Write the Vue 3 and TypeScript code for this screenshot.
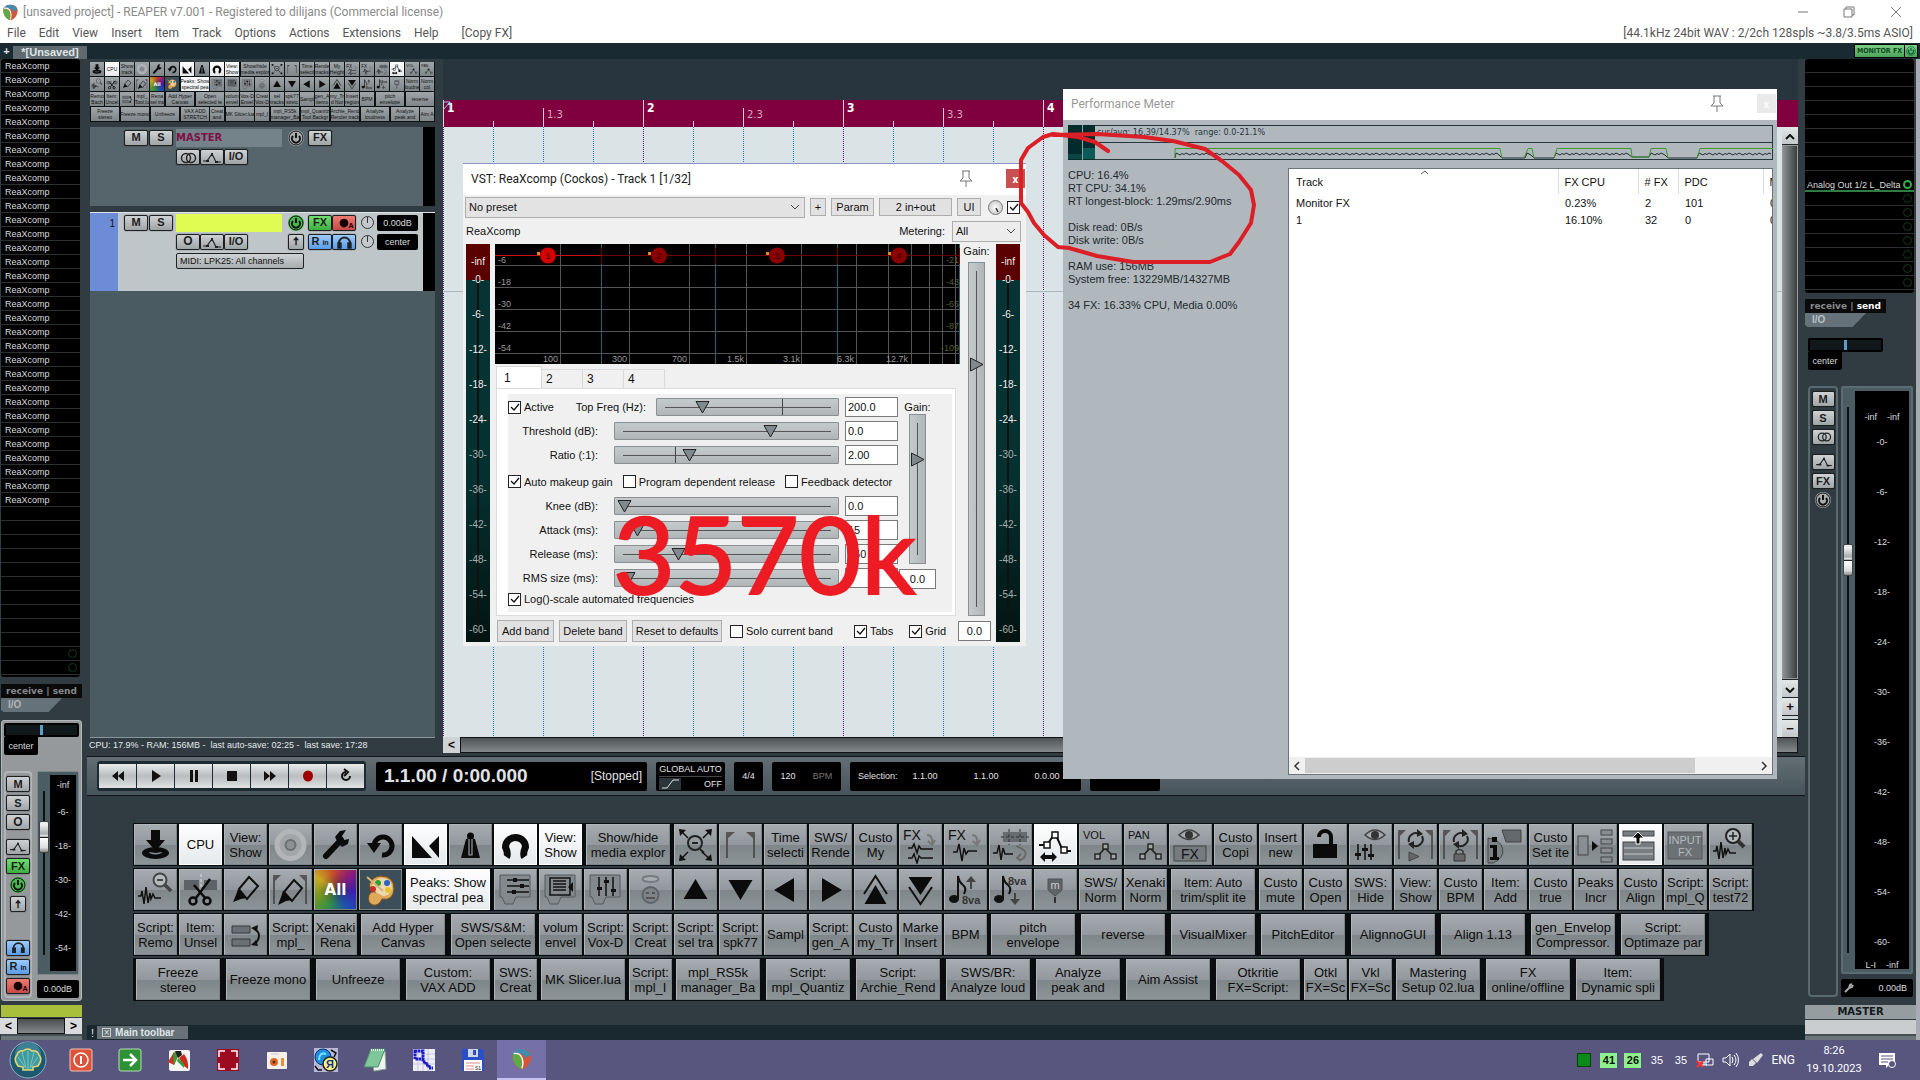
<script setup lang="ts">
interface Cell { t?: string[]; i?: string; s?: number; on?: boolean; bg?: string }

const wave = '<path d="M4 27h3l1-5 2 13 2-17 2 16 2-10 1 6 2-5 2 4h6" fill="none" stroke="#111" stroke-width="1.5"/>'
const sliders3 = '<path d="M6 6h30v22H22l-3 7h-8l-3-7H6z" fill="#83898d" stroke="#555b5f"/>'
const note = '<ellipse cx="10" cy="30" rx="5" ry="4" fill="#111"/><path d="M14 30V7q1 6 5 9t1 9" fill="none" stroke="#111" stroke-width="2"/>'
const envPts = '<path d="M18 33l8-9 9 9" fill="none" stroke="#222" stroke-width="1.6"/><g fill="#a0a6aa" stroke="#222" stroke-width="1.4"><rect x="16" y="30" width="5" height="5"/><rect x="24" y="20" width="5" height="5"/><rect x="32" y="30" width="5" height="5"/></g>'
const eye = (x: number, y: number) => `<path d="M${x - 10} ${y}q10-10 20 0q-10 9-20 0z" fill="#a4aaae" stroke="#444" stroke-width="1.6"/><circle cx="${x}" cy="${y}" r="4" fill="#333"/>`
const loop = '<path d="M5 35V8M38 35V8" stroke="#444" stroke-width="1.6"/><path d="M4 6h8l-7 7zM39 6h-8l7 7z" fill="#555"/><path d="M15 18a7 7 0 0 1 10-8M28 12a7 7 0 0 1-10 9" fill="none" stroke="#222" stroke-width="2"/><path d="M23 5l6 5-6 3zM20 25l-6-5 6-3z" fill="#222"/>'

const icons: Record<string, string> = {
  insert: '<path d="M17 6h9v10h5L21.500 27 12 16h5z" fill="#0b0b0b"/><path fill-rule="evenodd" d="M8 29a13.500 6 0 1 0 27 0a13.500 6 0 1 0-27 0zM15 28a6.500 2.500 0 1 0 13 0l-6 1z" fill="#0b0b0b"/>',
  rec: '<circle cx="21.500" cy="21" r="16" fill="#b2b6b9"/><circle cx="21.500" cy="21" r="11" fill="#a2a6a9"/><circle cx="21.500" cy="21" r="5" fill="#8c9194" stroke="#6a6f72" stroke-width="2"/>',
  wrench: '<path d="M12 32L27 16" stroke="#0b0b0b" stroke-width="6" stroke-linecap="round"/><path d="M24 19l-3-6 5-6 6-1-4 6 2 4 5-1 0 0-1 5-6 3z" fill="#0b0b0b"/>',
  undo: '<path d="M15 22A9 9 0 1 1 23 31" fill="none" stroke="#0b0b0b" stroke-width="5"/><path d="M8 19h14l-7 10z" fill="#0b0b0b"/>',
  ramp: '<path d="M8 12v22h20zM35 12v22L25 22z" fill="#0b0b0b"/>',
  metro: '<path d="M12 34l5-19h9l5 19zM18 12a3.500 3.500 0 1 1 7 0l-1 6h-5z" fill="#0b0b0b"/><path d="M20 15v16h3V15" fill="none" stroke="#9aa0a4" stroke-width="1.200"/>',
  magnet: '<path d="M12.500 33q2-3-1-10A10 9.500 0 1 1 31.500 23q-3 7-1 10" fill="none" stroke="#0b0b0b" stroke-width="7"/>',
  zoomall: '<g fill="none" stroke="#222" stroke-width="2"><circle cx="21" cy="19" r="7"/><path d="M18 19h6M26 25l4 4"/></g><path d="M5 5l7 1-6 6zM38 5l-7 1 6 6zM5 37l7-1-6-6zM38 37l-7-1 6-6z" fill="#111"/><path d="M6 6l8 8M37 6l-8 8M6 36l8-8M37 36l-9-8" stroke="#111" stroke-width="1.500"/>',
  bracket: '<path d="M8 34V10M35 34V10" stroke="#444" stroke-width="1.600"/><path d="M7 8h9l-8 7zM36 8h-9l8 7z" fill="#555"/>',
  fx2: '<text x="4" y="16" font-size="14" font-family="Liberation Sans" fill="#111">FX</text><path d="M28 11q6 0 5 8M29 17l4 4 3-5" fill="none" stroke="#777" stroke-width="2"/><path d="M9 24h4l2-4 3 9 2-7 2 3h12M9 34h4l2-4 3 9 2-7 2 2h12" fill="none" stroke="#111" stroke-width="1.500"/>',
  fx1: '<text x="4" y="16" font-size="14" font-family="Liberation Sans" fill="#111">FX</text><path d="M28 11q6 0 5 8M29 17l4 4 3-5" fill="none" stroke="#777" stroke-width="2"/><path d="M9 28h4l2-8 3 17 2-13 2 6 2-3h9" fill="none" stroke="#111" stroke-width="1.500"/>',
  itemw: '<path d="M14 8h24v10H14z" fill="#666c70"/><path d="M12 13h28M20 5v16M31 5v16" stroke="#333" stroke-dasharray="3 2"/><path d="M4 29h4l2-8 2 15 2-12 2 6h8" fill="none" stroke="#111" stroke-width="1.500"/><path d="M27 22q12 4 9 10t-8 2l4-4m-4 4l4 3" fill="none" stroke="#666" stroke-width="1.800"/>',
  env: '<path d="M5 21h8L21 9l8 18h8" fill="none" stroke="#111" stroke-width="2"/><g fill="#fff" stroke="#111" stroke-width="1.500"><rect x="10" y="18" width="6" height="6"/><rect x="18" y="8" width="6" height="6"/><rect x="27" y="23" width="6" height="6"/></g><path d="M6 33l5-5v3h7v-3l5 5-5 5v-3h-7v3z" fill="#111"/>',
  vol: '<text x="4" y="15" font-size="11" font-family="Liberation Sans" fill="#111">VOL</text>' + envPts,
  pan: '<text x="4" y="15" font-size="11" font-family="Liberation Sans" fill="#111">PAN</text>' + envPts,
  eyefx: eye(20, 11) + '<rect x="5" y="22" width="32" height="15" fill="#757b7f" stroke="#444"/><text x="12" y="35" font-size="14" font-family="Liberation Sans" fill="#111">FX</text>',
  lock: '<rect x="9" y="20" width="24" height="14" fill="#0b0b0b"/><path d="M15 13a6 6 0 0 1 12 0v8" fill="none" stroke="#0b0b0b" stroke-width="4"/>',
  eyemix: eye(26, 11) + '<path d="M9 20v16M16 20v16M22 20v16" stroke="#111" stroke-width="1.500"/><path d="M6 29h6v3H6zM13 24h6v3h-6zM19 30h6v3h-6z" fill="#111"/>',
  looplay: loop + '<path d="M15 28l10 4.500-10 4.500z" fill="#666" stroke="#444"/>',
  looplock: loop + '<path d="M15 30h11v7H15z" fill="#666" stroke="#333"/><path d="M17 30v-3q3-3 7 0v3" fill="none" stroke="#333" stroke-width="1.500"/>',
  info: '<path d="M18 6h19v12H22z" fill="#63696d" stroke="#444"/><path d="M4 14a16 13 0 0 1 5 25h-5z" fill="#7a8084" stroke="#444"/><path d="M8 13h5v5H8zM6 21h7v12h2v3H6v-3h3v-9H6z" fill="#0b0b0b"/>',
  list: '<g fill="#888e92" stroke="#444"><rect x="4" y="12" width="10" height="19"/><rect x="27" y="6" width="11" height="5"/><rect x="27" y="15" width="11" height="5"/><rect x="27" y="24" width="11" height="5"/><rect x="27" y="33" width="11" height="5"/></g><path d="M18 17l6 5-6 5z" fill="#0b0b0b"/>',
  alignt: '<g fill="#777d81" stroke="#444"><rect x="4" y="7" width="31" height="5"/><rect x="4" y="18" width="31" height="18"/></g><path d="M5 24h29M5 30h29" stroke="#ccc"/><path d="M17 20v-6h-4l6-6 6 6h-4v6z" fill="#0b0b0b" stroke="#fff"/>',
  inputfx: '<rect x="4" y="8" width="34" height="27" fill="#6c7175" stroke="#565b5e"/><g font-size="11" font-family="Liberation Sans" fill="#b5babd" text-anchor="middle"><text x="21" y="20">INPUT</text><text x="21" y="32">FX</text></g>',
  zoomin: '<circle cx="24" cy="12" r="7" fill="#b5babd" stroke="#222" stroke-width="2"/><path d="M20 12h8M24 8v8" stroke="#222" stroke-width="1.500"/><path d="M29 17l6 6" stroke="#333" stroke-width="4"/>' + wave,
  zoomout: '<circle cx="26" cy="11" r="6.500" fill="#b5babd" stroke="#444" stroke-width="2"/><path d="M23 11h6" stroke="#222" stroke-width="1.500"/><path d="M31 16l6 6" stroke="#444" stroke-width="3.500"/>' + wave,
  cut: '<path d="M5 11h15v10H5zM25 11h13v10H25z" fill="#5c6266"/><path d="M22 5v18" stroke="#ddd" stroke-dasharray="3 2"/><path d="M31 10L17 29M15 16l12 14" stroke="#0b0b0b" stroke-width="2.500"/><circle cx="14" cy="32" r="3.500" fill="none" stroke="#0b0b0b" stroke-width="2.500"/><circle cx="28" cy="32" r="3.500" fill="none" stroke="#0b0b0b" stroke-width="2.500"/>',
  marker: '<path d="M15 20L25 8l9 9-11 13z" fill="none" stroke="#111" stroke-width="2"/><path d="M14 20l9 9-6 1-8 3 3-7z" fill="#0b0b0b"/>',
  markerb: '<path d="M5 35V8M37 35V8" stroke="#444" stroke-width="1.600"/><path d="M4 6h8l-7 7zM38 6h-8l7 7z" fill="#555"/><path d="M15 23L25 11l8 8-10 13z" fill="none" stroke="#111" stroke-width="2"/><path d="M14 22l9 9-6 1-8 4 3-8z" fill="#0b0b0b"/>',
  all: '<text x="21.500" y="26" font-size="15" font-weight="bold" font-family="DejaVu Sans" fill="#fff" text-anchor="middle">All</text>',
  palette: '<path d="M21 7q14 0 14 13-1 12-12 10-3 7-9 6-6-2-4-10 2-4 7-3-9-5-6-9 3-6 10-7z" fill="#e0a85a" stroke="#7d5320"/><path d="M22 9q11 0 11 11-2 7-9 7-12-5-11-11 3-6 9-7z" fill="#ead9b0"/><circle cx="19" cy="14" r="3" fill="#2e9e30"/><circle cx="28" cy="14" r="3" fill="#2a62c8"/><circle cx="14" cy="20" r="3" fill="#c43424"/><circle cx="29" cy="21" r="3" fill="#e6c32c"/><path d="M8 8l16 14" stroke="#d9b080" stroke-width="2"/>',
  tcp1: sliders3 + '<path d="M13 11h22M13 17h22M13 23h22" stroke="#111" stroke-width="1.500"/><path d="M19 9h4v4h-4zM26 15h4v4h-4zM18 21h4v4h-4z" fill="#111"/>',
  tcp2: sliders3 + '<path d="M11 9h20v17H11z" fill="none" stroke="#111" stroke-width="1.500"/><path d="M14 12h13M14 15h13M14 18h13M14 21h13" stroke="#111" stroke-width="1.500"/><path d="M34 13v10l-5-5z" fill="#111"/>',
  tcp3: sliders3 + '<path d="M15 8v19M22 8v19M29 8v19" stroke="#111" stroke-width="1.500"/><path d="M13 18h5v3h-5zM20 11h5v3h-5zM27 20h5v3h-5z" fill="#111"/>',
  face: '<ellipse cx="21.500" cy="10" rx="8" ry="3" fill="#a7acaf" stroke="#777c80" stroke-width="2"/><circle cx="21.500" cy="26" r="8" fill="#7d8387" stroke="#5d6367" stroke-width="2"/><path d="M17 24h3M23 24h3M17 29h9" stroke="#444" stroke-width="1.500" fill="none"/>',
  up: '<path d="M21.500 10l12 20h-24z" fill="#0b0b0b"/>',
  down: '<path d="M21.500 31l12-20h-24z" fill="#0b0b0b"/>',
  left: '<path d="M10 21l20-12v24z" fill="#0b0b0b"/>',
  right: '<path d="M33 21L13 9v24z" fill="#0b0b0b"/>',
  dup: '<path d="M21.500 16l11 19h-22z" fill="#0b0b0b"/><path d="M10 25L21.500 7 33 25" fill="none" stroke="#111" stroke-width="2"/>',
  ddown: '<path d="M21.500 26l12-18h-24z" fill="#0b0b0b"/><path d="M10 18l11.500 17L33 18" fill="none" stroke="#111" stroke-width="2"/>',
  noteup: note + '<path d="M26 20v-7h-4l5-6 5 6h-4v7z" fill="#444"/><text x="18" y="35" font-size="11" font-weight="bold" font-family="Liberation Sans" fill="#333">8va</text>',
  notedn: note + '<path d="M25 24v6h-4l5 6 5-6h-4v-6z" fill="#444"/><text x="19" y="16" font-size="11" font-weight="bold" font-family="Liberation Sans" fill="#333">8va</text>',
  mmark: '<path d="M14 10h14v11l-7 6-7-6z" fill="#5e6468" stroke="#4c5256"/><text x="21" y="20" font-size="11" font-family="Liberation Sans" fill="#ccc" text-anchor="middle">m</text><path d="M21 28v6" stroke="#111" stroke-width="1.500"/>',
  swap: '<path d="M8 12h18v7H8zM8 25h18v7H8z" fill="#6a7074" stroke="#33383b"/><path d="M31 15q8 6 0 15" fill="none" stroke="#111" stroke-width="2"/><path d="M27 14l7-3-1 7zM27 31l7 1-2-6z" fill="#111"/>',
}

const i = (n: string, on = false, bg = ''): Cell => ({ i: n, on, bg })
const t = (...l: string[]): Cell => ({ t: l })
const w = (...l: string[]): Cell => ({ t: l, s: 2 })
const onT = (s: number, ...l: string[]): Cell => ({ t: l, s, on: true })

const head1 = (view: Cell): Cell[] => [i('insert'), onT(1, 'CPU'), view, i('rec'), i('wrench'), i('undo'), i('ramp', true), i('metro'), i('magnet', true), onT(1, 'View:', 'Show'), w('Show/hide', 'media explor'), i('zoomall'), i('bracket')]
const mid1: Cell[] = [i('fx2'), i('fx1'), i('itemw'), i('env', true), i('vol'), i('pan')]
const head2: Cell[] = [i('zoomout'), i('cut'), i('marker'), i('markerb'), i('all', false, 'rainbow'), i('palette', false, 'slate'), onT(2, 'Peaks: Show', 'spectral pea'), i('tcp1'), i('tcp2'), i('tcp3'), i('face'), i('up'), i('down'), i('left'), i('right'), i('dup'), i('ddown'), i('noteup'), i('notedn'), i('mmark')]

const toolbar: Cell[][] = [
  [...head1(t('View:', 'Show')), t('Time', 'selecti'), t('SWS/', 'Rende'), t('Custo', 'My'), ...mid1, i('eyefx'), t('Custo', 'Copi'), t('Insert', 'new'), i('lock'), i('eyemix'), i('looplay'), i('looplock'), i('info'), t('Custo', 'Set ite'), i('list'), i('alignt', true), i('inputfx'), i('zoomin')],
  [...head2, t('SWS/', 'Norm'), t('Xenaki', 'Norm'), w('Item: Auto', 'trim/split ite'), t('Custo', 'mute'), t('Custo', 'Open'), t('SWS:', 'Hide'), t('View:', 'Show'), t('Custo', 'BPM'), t('Item:', 'Add'), t('Custo', 'true'), t('Peaks', 'Incr'), t('Custo', 'Align'), t('Script:', 'mpl_Q'), t('Script:', 'test72')],
  [t('Script:', 'Remo'), t('Item:', 'Unsel'), i('swap'), t('Script:', 'mpl_'), t('Xenaki', 'Rena'), w('Add Hyper', 'Canvas'), w('SWS/S&M:', 'Open selecte'), t('volum', 'envel'), t('Script:', 'Vox-D'), t('Script:', 'Creat'), t('Script:', 'sel tra'), t('Script:', 'spk77'), t('Sampl'), t('Script:', 'gen_A'), t('Custo', 'my_Tr'), t('Marke', 'Insert'), t('BPM'), w('pitch', 'envelope'), w('reverse'), w('VisualMixer'), w('PitchEditor'), w('AlignnoGUI'), w('Align 1.13'), w('gen_Envelop', 'Compressor.'), w('Script:', 'Optimaze par')],
  [w('Freeze', 'stereo'), w('Freeze mono'), w('Unfreeze'), w('Custom:', 'VAX ADD'), t('SWS:', 'Creat'), w('MK Slicer.lua'), t('Script:', 'mpl_I'), w('mpl_RS5k', 'manager_Ba'), w('Script:', 'mpl_Quantiz'), w('Script:', 'Archie_Rend'), w('SWS/BR:', 'Analyze loud'), w('Analyze', 'peak and'), w('Aim Assist'), w('Otkritie', 'FX=Script:'), t('Otkl', 'FX=Sc'), t('Vkl', 'FX=Sc'), w('Mastering', 'Setup 02.lua'), w('FX', 'online/offline'), w('Item:', 'Dynamic spli')],
]
const mini: Cell[][] = [
  [...head1(t('Show', 'track')), t('Time', 'selecti'), t('Rende', 'tracks'), t('My', 'Height'), ...mid1],
  [...head2, t('Norm', 'loudne'), t('Norm', 'col')],
  [t('Remo', 'Bach'), t('Item:', 'Uncel'), i('swap'), t('mpl_', 'Tool.lu'), t('Rena', 'sel tra'), w('Add Hyper', 'Canvas'), w('Open', 'selected te'), t('volum', 'envel'), t('Vox-D', 'Envel'), t('Creat', 'Vox-D'), t('sel', 'tracks'), t('spk77', 'stretc'), t('Sampl'), t('gen_A', 'items'), t('my_Tr', 'd Nor'), t('Insert', 'region'), t('BPM'), w('pitch', 'envelope'), w('reverse')],
  [w('Freeze', 'stereo'), w('Freeze mono'), w('Unfreeze'), w('VAX ADD', 'STRETCH'), t('Creat', 'and'), w('MK Slicer.lua'), t('mpl_I'), w('mpl_RS5k', 'manager_Ba'), w('mpl_Quantiz', 'Tool Backgr'), w('Archie_Rend', 'Render track'), w('Analyze', 'loudness'), w('Analyze', 'peak and'), t('Aim A')],
]

const ringI = '<circle cx="9" cy="8" r="4.500"/><circle cx="14" cy="8" r="4.500"/>'
const envI = '<path d="M2 11h4l5-7 4 8h5" stroke-width="1.200"/><path d="M5 10h3v2H5zM10 3h2v3h-2zM14 11h3v2h-3z" fill="#222" stroke="none"/>'
const phones = '<path d="M6 10V8a5.500 5.500 0 0 1 11 0v2" stroke-width="2"/><path d="M5 8h3v5H5zM15 8h3v5h-3z" fill="#123"/>'
const armI = '<circle cx="11" cy="8" r="5" fill="#140000" stroke="none"/><text x="16" y="14" font-size="8" font-weight="bold" fill="#140000" stroke="none">A</text>'
const powerI = '<circle cx="8" cy="8" r="7" class="pd"/><path d="M5 6a4 4 0 1 0 6 0M8 3v5" stroke-width="2"/>'
const logo = '<path d="M12 1c7 0 11 4 10 10-1 7-6 12-10 12S3 18 2 11C1 5 5 1 12 1z" fill="#d4543c"/><path d="M2 6q6-1 9 4 3 6 1 13C7 22 2 16 2 11z" fill="#62a845"/><path d="M2 7C5-1 18-1 22 8q-3 0-6 3Q12 3 2 7z" fill="#3f8db0"/><path d="M3 6q7-1 9 5 2 5 0 11" fill="none" stroke="#fff" stroke-width="1.500"/>'

const menus = ['File', 'Edit', 'View', 'Insert', 'Item', 'Track', 'Options', 'Actions', 'Extensions', 'Help']
const bars = Array.from({ length: 27 }, (_, n) => n)
const meterDb = ['-0-', '-6-', '-12-', '-18-', '-24-', '-30-', '-36-', '-42-', '-48-', '-54-', '-60-']
const graphV = [65, 134, 194, 251, 306, 361, 393, 416, 434, 447, 460]
const freqs: [number, string][] = [[63, '100'], [132, '300'], [192, '700'], [249, '1.5k'], [305, '3.1k'], [359, '6.3k'], [413, '12.7k']]
const dbL = ['-6', '-18', '-30', '-42', '-54']
const dbR = ['-21', '-43', '-65', '-87', '-109']
const nodes = [53, 164, 282, 404]
const params1: [string, number, string, string][] = [['Threshold (dB):', 71, '0.0', ''], ['Ratio (:1):', 32, '2.00', 'n1']]
const params2: [string, number, string][] = [['Knee (dB):', 1, '0.0'], ['Attack (ms):', 7, '15'], ['Release (ms):', 27, '150'], ['RMS size (ms):', 3, '5']]
const perf = ['CPU: 16.4%', 'RT CPU: 34.1%', 'RT longest-block: 1.29ms/2.90ms', '', 'Disk read: 0B/s', 'Disk write: 0B/s', '', 'RAM use: 156MB', 'System free: 13229MB/14327MB', '', '34 FX: 16.33% CPU, Media 0.00%']
const noisy = (a: number, b: number) => Array.from({ length: Math.floor((b - a) / 2) }, (_, n) => `L${a + n * 2} ${28 + ((n * 7) % 5) * 0.5}`).join('')
const cpuLine = `M107 33${noisy(108, 432)}L434 33H457${noisy(459, 465)}L466 33H486${noisy(488, 563)}L564 32H581${noisy(583, 599)}L600 33H629${noisy(631, 705)}`
const transport = [
  'M12 4v10L6 9zM18 4v10l-6-5z', 'M8 3l9 6-9 6z', 'M8 3h3v12H8zM13 3h3v12h-3z', 'M7 4h10v10H7z', 'M6 4v10l6-5zM12 4v10l6-5z', 'M17 9a5 5.500 0 1 1-10 0a5 5.500 0 1 1 10 0', '',
]
const stripDb = ['-6-', '-18-', '-30-', '-42-', '-54-']
const tasks = [
  '<rect x="1" y="1" width="22" height="22" rx="2" fill="#dd5238" stroke="#f5c0b0"/><circle cx="12" cy="12" r="7" fill="none" stroke="#fff" stroke-width="1.500"/><path d="M12 8v8" stroke="#fff" stroke-width="2"/>',
  '<rect x="1" y="1" width="22" height="22" rx="2" fill="#2c9234" stroke="#b5dfb5"/><path d="M5 12h13M12 6l6 6-6 6" fill="none" stroke="#fff" stroke-width="2.500"/>',
  '<rect x="2" y="2" width="21" height="21" rx="2" fill="#f4f4f4"/><path d="M7 4L1 14l6 3 4-9z" fill="#d23020"/><path d="M7 17l4-9 1-3-4-1-2 4z" fill="#31a03a"/><path d="M8 3h6l1 4-4 3z" fill="#222"/><path d="M12 10l5-4q5 7 4 15l-4-3z" fill="#cc2a1c"/><path d="M11 10l-1 3 7 7 0-4z" fill="#31a03a"/>',
  '<rect x="1" y="1" width="22" height="22" fill="#9d0b20"/><path d="M3 9V3h6M15 3h6v6M21 15v6h-6M9 21H3v-6" fill="none" stroke="#fff" stroke-width="1.500"/>',
  '<rect x="2" y="4" width="20" height="17" rx="1" fill="#f5f1ea"/><circle cx="9" cy="14" r="4" fill="#e2682a"/><circle cx="9" cy="14" r="1.500" fill="#5b2a10"/><path d="M16 10h3v8h-3z" fill="#eb8f3a"/><path d="M6 6h8" stroke="#ccc"/>',
  '<rect width="24" height="24" fill="#b9b8d8"/><circle cx="9" cy="9" r="8" fill="#1e90e0" stroke="#003070"/><path d="M5 12q0-8 7-6" stroke="#7fe0ff" stroke-width="2" fill="none"/><circle cx="16" cy="16" r="7" fill="#fff27a" stroke="#222" stroke-width="1.500"/><text x="16" y="20" font-size="11" font-weight="bold" font-family="Liberation Sans" text-anchor="middle" fill="#1030a0">Я</text><path d="M17 2l5 3-2 4M1 18l3 4 4 0" stroke="#111" fill="none" stroke-width="1.500"/>',
  '<path d="M7 3h15l1 18-12 2z" fill="#eef3ee" stroke="#8a9"/><path d="M8 1h14l-7 18H1z" fill="#7fc79a" stroke="#4b8d68"/><path d="M8 2h13" stroke="#e8f6ec" stroke-width="2" stroke-dasharray="1 1"/>',
  '<rect x="1" y="1" width="22" height="22" fill="#eeeef6"/><path d="M1 6h22M1 11h22M1 16h22M6 1v22M11 1v22M16 1v22" stroke="#c4c4dc"/><path d="M3 3h8v8H3zM11 11v3h3v3h3v3h4" fill="none" stroke="#1a1ac8" stroke-width="3" stroke-dasharray="2.500 .5"/>',
  '<path d="M1 1h20l2 2v20H1z" fill="#2a50c8"/><path d="M7 1h10v8H7z" fill="#cfd6e6"/><path d="M12 2h3v5h-3z" fill="#2a50c8"/><path d="M3 12h18v11H3z" fill="#fff"/><path d="M5 15h14M5 18h8M5 21h8" stroke="#d88" /><text x="14" y="22" font-size="5" font-family="Liberation Sans" fill="#111">S1</text>',
]
</script>

<template>
  <div class="app">
    <header class="title">
      <svg width="17" height="17" viewBox="0 0 24 24" v-html="logo" />
      <span class="ttl">[unsaved project] - REAPER v7.001 - Registered to dilijans (Commercial license)</span>
      <div class="winbtns">
        <button aria-label="Minimize"><svg width="12" height="12"><path d="M1 6h10" /></svg></button>
        <button aria-label="Restore"><svg width="12" height="12"><path d="M1 3h8v8H1zM3 3V1h8v8H9" /></svg></button>
        <button aria-label="Close"><svg width="12" height="12"><path d="M1 1l10 10M11 1L1 11" /></svg></button>
      </div>
    </header>
    <nav class="menu">
      <a v-for="m in menus" :key="m" href="#">{{ m }}</a>
      <a href="#" class="copy">[Copy FX]</a>
      <span class="audio">[44.1kHz 24bit WAV : 2/2ch 128spls ~3.8/3.5ms ASIO]</span>
    </nav>
    <div class="tabs">
      <button class="plus">+</button><button class="ptab">*[Unsaved]</button>
      <span class="monfx"><button>MONITOR FX</button><button aria-label="Power"><svg width="10" height="10" viewBox="0 0 16 16" fill="none" stroke="#063" v-html="powerI" /></button></span>
    </div>

    <main class="main">
      <aside class="mix left">
        <div class="fxlist">
          <div v-for="n in 44" :key="n" class="fxrow"><span v-if="n <= 32">ReaXcomp</span><i v-if="n > 42" class="dot" /></div>
        </div>
        <div class="rs">receive | send</div>
        <div class="io">I/O</div>
        <div class="strip">
          <input class="pan" type="range" value="50" aria-label="Pan">
          <div class="panlab">center</div>
          <div class="sbody">
            <div class="bcol">
              <button class="b">M</button><button class="b">S</button><button class="b big-o">O</button>
              <button class="b g6" aria-label="Envelope"><svg width="22" height="14" viewBox="0 0 22 16" v-html="envI" /></button>
              <button class="b green">FX</button>
              <button class="pw on" aria-label="Bypass"><svg width="16" height="16" v-html="powerI" /></button>
              <button class="b sq">🠅</button>
              <button class="b blue push" aria-label="Monitor"><svg width="22" height="14" viewBox="0 0 22 16" v-html="phones" /></button>
              <button class="b blue">R <small>in</small></button>
              <button class="b red" aria-label="Record arm"><svg width="22" height="14" viewBox="0 0 22 16" v-html="armI" /></button>
            </div>
            <div class="fcol">
              <div class="fader"><input class="fd" type="range" value="72" aria-label="Volume"><div class="vu"><span class="vinf">-inf</span><span v-for="d in stripDb" :key="d">{{ d }}</span></div></div>
              <output>0.00dB</output>
            </div>
          </div>
        </div>
        <div class="lime" />
        <div class="sbar"><button>&lt;</button><i /><button>&gt;</button></div>
        <div class="foot" />
      </aside>

      <section class="center">
        <div class="work">
          <div class="tcp">
            <div class="mini">
              <div v-for="(r, a) in mini" :key="a" class="mrow">
                <button v-for="(c, k) in r" :key="k" class="mc" :class="[{ wide: c.s === 2, on: c.on }, c.bg]">
                  <svg v-if="c.i" viewBox="0 0 43 41" v-html="icons[c.i]" /><span v-for="l in c.t" :key="l">{{ l }}</span>
                </button>
              </div>
            </div>
            <div class="track master">
              <div class="tgrid">
                <div class="pair"><button class="b">M</button><button class="b">S</button></div>
                <div class="tname">MASTER</div>
                <button class="pw" aria-label="Bypass"><svg width="16" height="16" v-html="powerI" /></button>
                <div class="trio"><button class="b">FX</button></div>
                <div class="trio r2"><button class="b" aria-label="Mono"><svg width="22" height="16" v-html="ringI" /></button><button class="b" aria-label="Envelope"><svg width="22" height="16" v-html="envI" /></button><button class="b">I/O</button></div>
              </div>
              <i class="tvu" />
            </div>
            <div class="track one">
              <div class="tnum">1</div>
              <div class="tgrid">
                <div class="pair"><button class="b">M</button><button class="b">S</button></div>
                <div class="tname yel" />
                <button class="pw on" aria-label="Bypass"><svg width="16" height="16" v-html="powerI" /></button>
                <div class="trio"><button class="b green">FX</button><button class="b red" aria-label="Record arm"><svg width="22" height="14" viewBox="0 0 22 16" v-html="armI" /></button></div>
                <i class="knob" /><output>0.00dB</output>
                <div class="trio r2"><button class="b big-o">O</button><button class="b" aria-label="Envelope"><svg width="22" height="16" v-html="envI" /></button><button class="b">I/O</button></div>
                <button class="b sq">🠅</button>
                <div class="trio"><button class="b blue">R <small>in</small></button><button class="b blue" aria-label="Monitor"><svg width="22" height="16" v-html="phones" /></button></div>
                <i class="knob" /><output>center</output>
                <button class="midi r2">MIDI: LPK25: All channels</button>
              </div>
              <i class="tvu" />
            </div>
            <div class="tfill" />
            <div class="status">CPU: 17.9% - RAM: 156MB -&nbsp; last auto-save: 02:25 -&nbsp; last save: 17:28</div>
          </div>

          <div class="arr">
            <svg class="ruler" height="27">
              <g v-for="n in bars" :key="n">
                <line :x1="n * 50 + .5" :x2="n * 50 + .5" :y1="n % 4 === 0 ? 0 : n % 2 === 0 ? 8 : 21" y2="27" stroke="#e9c9d8" />
                <text v-if="n % 4 === 0" :x="n * 50 + 4" y="12" class="rb">{{ n / 4 + 1 }}</text>
                <text v-else-if="n % 2 === 0" :x="n * 50 + 4" y="18" class="rs2">{{ Math.floor(n / 4) + 1 }}.3</text>
              </g>
              <path d="M0 2h7v8M7 2L0 10" fill="none" stroke="#7fd8ee" />
            </svg>
            <div class="arow">
              <svg class="grid">
                <line v-for="n in bars" :key="n" :x1="n * 50 + .5" :x2="n * 50 + .5" y1="0" y2="100%" :stroke="n % 4 === 0 ? '#6a1080' : '#1c78d8'" stroke-dasharray="1 1" />
                <line x1="0" x2="100%" y1="164.500" y2="164.500" stroke="#a9b7bb" />
              </svg>
              <div class="vsb">
                <button aria-label="Scroll up"><svg width="10" height="6"><path d="M1 5l4-4 4 4" /></svg></button><i />
                <button aria-label="Scroll down"><svg width="10" height="6"><path d="M1 1l4 4 4-4" /></svg></button><button>+</button><b /><button>−</button>
              </div>
            </div>
            <div class="hsb"><button>&lt;</button><i /></div>
          </div>
        </div>

        <div class="transport">
          <div class="tbtns">
            <button v-for="(p, k) in transport" :key="k" :aria-label="'Transport ' + k">
              <svg width="24" height="18"><path v-if="p" :d="p" :fill="k === 5 ? '#a00000' : '#111'" /><path v-else d="M12 5a4 4 0 1 0 4 4M10 2l4 3-4 4" fill="none" stroke="#111" stroke-width="2" /></svg>
            </button>
          </div>
          <div class="disp"><b>1.1.00 / 0:00.000</b><span>[Stopped]</span></div>
          <div class="ga"><span>GLOBAL AUTO</span><div><svg width="22" height="12"><path d="M3 10h5l6-8h6" fill="none" stroke="#ddd" /></svg><span>OFF</span></div></div>
          <div class="box sm">4/4</div>
          <div class="box bpm"><span>120</span><span class="dim">BPM</span></div>
          <div class="box sel"><span>Selection:</span><span>1.1.00</span><span>1.1.00</span><span>0.0.00</span></div>
          <div class="box last" />
        </div>

        <div class="tools">
          <div class="tset">
            <div v-for="(r, a) in toolbar" :key="a" class="trow">
              <button v-for="(c, k) in r" :key="k" class="tc" :class="[{ wide: c.s === 2, on: c.on }, c.bg]">
                <svg v-if="c.i" viewBox="0 0 43 41" v-html="icons[c.i]" /><span v-for="l in c.t" :key="l">{{ l }}</span>
              </button>
            </div>
          </div>
        </div>
        <div class="dock"><span>!</span><button><i>×</i>Main toolbar</button></div>
      </section>

      <aside class="mix right">
        <div class="fxlist">
          <div v-for="n in 16" :key="n" class="fxrow" :class="{ send: n === 9 }"><span v-if="n === 9">Analog Out 1/2 L_Delta</span><i v-if="n > 8" class="dot" /></div>
        </div>
        <div class="rs">receive | <b>send</b></div>
        <div class="io">I/O</div>
        <div class="rstrip">
          <input class="pan" type="range" value="50" aria-label="Pan">
          <div class="panlab">center</div>
          <div class="sbody">
            <div class="bcol">
              <button class="b">M</button><button class="b">S</button>
              <button class="b" aria-label="Mono"><svg width="22" height="14" viewBox="0 0 22 16" v-html="ringI" /></button>
              <button class="b g6" aria-label="Envelope"><svg width="22" height="14" viewBox="0 0 22 16" v-html="envI" /></button>
              <button class="b">FX</button>
              <button class="pw" aria-label="Bypass"><svg width="16" height="16" v-html="powerI" /></button>
            </div>
            <div class="fcol">
              <div class="fader"><input class="fd" type="range" value="72" aria-label="Volume"><div class="vu"><span class="two"><i>-inf</i><i>-inf</i></span><span v-for="d in meterDb" :key="d">{{ d }}</span><span class="two"><i>L-I</i><i>-inf</i></span></div></div>
              <output><svg width="10" height="10"><path d="M1 9l5-5M5 5l1-3 2-1M5 5l3-1 1-2" stroke="#aaa" stroke-width="2" fill="none" /></svg>0.00dB</output>
            </div>
          </div>
        </div>
        <div class="mname">MASTER</div>
        <div class="mwhite" />
        <div class="foot" />
      </aside>
      <div class="edge" />
    </main>

    <footer class="task">
      <button class="orb" aria-label="Start"><svg width="38" height="38"><circle cx="19" cy="19" r="18" fill="#1d5a70" stroke="#8fb5c4" /><circle cx="19" cy="14" r="13" fill="#3d8096" /><path d="M9 25Q4 18 8 14q2-5 6-4 5-4 9 0 5-1 7 4 4 4-1 11l-5 1v3H14v-3z" fill="#3f9aa0" stroke="#e8d870" stroke-width="1.500" /><path d="M19 10v18M13 11l4 16M25 11l-4 16M9 16l7 10M29 16l-7 10" stroke="#7cc6bd" /></svg></button>
      <button v-for="(k, n) in tasks" :key="n" :aria-label="'App ' + n"><svg width="24" height="24" v-html="k" /></button>
      <button class="act" aria-label="REAPER"><svg width="22" height="22" viewBox="0 0 24 24" v-html="logo" /></button>
      <div class="tray">
        <i class="gsq" /><em>41</em><em>26</em><u>35</u><u>35</u>
        <svg width="18" height="18"><path d="M2 3h11v8H2zM5 14h6M8 11v3M10 8h7v6h-7z" fill="#58557f" stroke="#fff" /><path d="M1 10l6 6M7 10l-6 6" stroke="#f33" stroke-width="2" /></svg>
        <svg width="18" height="18"><path d="M2 7h3l4-4v12l-4-4H2z" fill="none" stroke="#fff" /><path d="M11 6q2 3 0 6M13 4q4 5 0 10M15 2q5 7 0 14" fill="none" stroke="#fff" /></svg>
        <svg width="18" height="18"><path d="M15 2L7 8l4 4 6-8zM6 8l-3 3v4h4l3-3z" fill="#ddd" /></svg>
        <span class="eng">ENG</span>
        <span class="clock">8:26<br>19.10.2023</span>
        <svg width="20" height="18"><path d="M2 2h16v12h-6l-3 3v-3H2z" fill="#fff" /><path d="M4 5h12M4 8h12M4 11h7" stroke="#58557f" /><circle cx="15" cy="13" r="3.500" fill="#58557f" stroke="#fff" /></svg>
      </div>
    </footer>

    <section class="win vst">
      <div class="wt dark"><span>VST: ReaXcomp (Cockos) - Track 1 [1/32]</span><svg width="16" height="18"><path d="M4 1h8M5 1v7l-3 3h12l-3-3V1M8 11v6" fill="none" stroke="#777" /></svg><button class="x">x</button></div>
      <div class="vbar">
        <select aria-label="Preset"><option>No preset</option></select>
        <button class="wb w1">+</button><button class="wb w2">Param</button><button class="wb w3">2 in+out</button><button class="wb w4">UI</button><i class="kn"><svg width="13" height="13"><path d="M7 7l2 4" stroke="#333" stroke-width="1.500" /></svg></i><input type="checkbox" checked aria-label="Enabled">
      </div>
      <div class="vmet"><span>ReaXcomp</span><label for="met">Metering:</label><select id="met"><option>All</option></select></div>
      <div class="vbody">
        <div class="lev"><span class="li">-inf</span><span v-for="d in meterDb" :key="d">{{ d }}</span></div>
        <div class="vmid">
          <div class="vtop">
            <div class="vcol">
              <svg class="graph" width="465" height="120">
                <rect width="465" height="120" fill="#000" />
                <g stroke="#555"><line v-for="x in graphV" :key="x" :x1="x + .5" :x2="x + .5" y1="0" y2="120" /><line v-for="n in 5" :key="n" x1="0" x2="465" :y1="n * 22 - .5" :y2="n * 22 - .5" /></g>
                <g stroke="#1f6474"><line v-for="x in [106, 220, 342, 464]" :key="x" :x1="x + .5" :x2="x + .5" y1="0" y2="120" /></g>
                <path d="M106.500 11.500H465M106.500 4v16M220.500 4v16M342.500 4v16M464.500 4v16" stroke="#700000" /><path d="M0 11.500h106" stroke="#c81010" />
                <g v-for="(x, n) in nodes" :key="x"><rect :x="x - 11" y="8" width="3" height="3" fill="#e08a20" /><circle :cx="x" cy="11.500" r="8" :fill="n ? '#8a0000' : '#d40000'" /><text :x="x" y="15" text-anchor="middle" fill="#3a0000">{{ n + 1 }}</text></g>
                <text v-for="(d, n) in dbL" :key="d" x="3" :y="19 + n * 22" fill="#999">{{ d }}</text>
                <text v-for="(d, n) in dbR" :key="d" x="464" :y="19 + n * 22" fill="#5c5c30" text-anchor="end">{{ d }}</text>
                <text v-for="f in freqs" :key="f[1]" :x="f[0]" y="118" fill="#999" text-anchor="end">{{ f[1] }}</text>
              </svg>
              <div class="vtabs"><button class="cur">1</button><button>2</button><button>3</button><button>4</button></div>
              <div class="panel"><div class="inner">
                <div class="prs">
                  <div class="pr"><label class="ck"><input type="checkbox" checked>Active</label><label class="tf" for="tf">Top Freq (Hz):</label><input id="tf" class="sl n2" type="range" value="23"><input class="num" type="text" value="200.0" aria-label="Top Freq value"></div>
                  <div v-for="p in params1" :key="p[0]" class="pr"><label class="pl" :for="p[0]">{{ p[0] }}</label><input :id="p[0]" class="sl" :class="p[3]" type="range" :value="p[1]"><input class="num" type="text" :value="p[2]" :aria-label="p[0] + ' value'"></div>
                  <div class="pr cks"><label class="ck"><input type="checkbox" checked>Auto makeup gain</label><label class="ck"><input type="checkbox">Program dependent release</label><label class="ck"><input type="checkbox">Feedback detector</label></div>
                  <div v-for="p in params2" :key="p[0]" class="pr"><label class="pl" :for="p[0]">{{ p[0] }}</label><input :id="p[0]" class="sl" type="range" :value="p[1]"><input class="num" type="text" :value="p[2]" :aria-label="p[0] + ' value'"></div>
                  <div class="pr log"><label class="ck"><input type="checkbox" checked>Log()-scale automated frequencies</label></div>
                </div>
                <div class="gcol"><label for="bg">Gain:</label><input id="bg" class="vs" type="range" value="72"><input class="num" type="text" value="0.0" aria-label="Band gain"></div>
              </div></div>
            </div>
            <div class="ggain"><label for="mg">Gain:</label><input id="mg" class="vs" type="range" value="72"></div>
          </div>
          <div class="vbot">
            <button class="wb">Add band</button><button class="wb">Delete band</button><button class="wb">Reset to defaults</button>
            <label class="ck"><input type="checkbox">Solo current band</label>
            <label class="ck ml"><input type="checkbox" checked>Tabs</label><label class="ck"><input type="checkbox" checked>Grid</label>
            <input class="num c" type="text" value="0.0" aria-label="Output gain">
          </div>
        </div>
        <div class="lev"><span class="li">-inf</span><span v-for="d in meterDb" :key="d">{{ d }}</span></div>
      </div>
      <div class="big">3570k</div>
    </section>

    <section class="win pm">
      <div class="wt"><span>Performance Meter</span><svg width="16" height="18"><path d="M4 1h8M5 1v7l-3 3h12l-3-3V1M8 11v6" fill="none" stroke="#777" /></svg><button class="x off">x</button></div>
      <div class="pbody">
        <svg class="cpu" width="705" height="35">
          <rect x=".5" y=".5" width="704" height="34" fill="none" stroke="#26363d" /><path d="M0 17.500h705" stroke="#26363d" />
          <rect width="27" height="35" fill="#022c2c" /><rect x="15" y="23" width="12" height="11" fill="#0c5a58" /><rect x="0" y="29" width="14" height="5" fill="#0c4644" /><path d="M14.500 0v35" stroke="#8aa" />
          <text x="29" y="10">cur/avg: 16.39/14.37%&nbsp; range: 0.0-21.1%</text>
          <path :d="cpuLine" fill="none" stroke="#1d2b30" />
          <path d="M107 33V23.500H432L434 33M456 33l4-9.500h4l2 9.500M486 33l3-9.500h74l1 8.500h17l2-8.500h15l2 9.500M629 33l3-9.500h73" fill="none" stroke="#3f9a2c" />
        </svg>
        <div class="pcols">
          <div class="ptext"><div v-for="(l, n) in perf" :key="n">{{ l }}</div></div>
          <div class="ptab2">
            <table>
              <thead><tr><th class="c1">Track</th><th class="c2">FX CPU</th><th class="c3"># FX</th><th class="c4">PDC</th><th>M</th></tr></thead>
              <tbody><tr><td>Monitor FX</td><td>0.23%</td><td>2</td><td>101</td><td>0</td></tr><tr><td>1</td><td>16.10%</td><td>32</td><td>0</td><td>0</td></tr></tbody>
            </table>
            <svg class="sort" width="9" height="5"><path d="M1 4l4-3 3 3" fill="none" stroke="#555" /></svg>
            <div class="psb"><svg width="16" height="16"><path d="M10 4L6 8l4 4" /></svg><i /><svg width="16" height="16"><path d="M6 4l4 4-4 4" /></svg></div>
          </div>
        </div>
      </div>
    </section>

    <svg class="ring" width="240" height="136"><path d="M89 20L76 11 59 6 34 3 24 6 9 17 2 29v43l7 9 6 11 10 12 14 12 11 1 28 8 36 6h77l20-8 9-12 12-19 3-18-3-15-12-15-17-14-17-12-32-8-29-4-47-3-44 1" fill="none" stroke="#dc1f26" stroke-width="4" stroke-linejoin="round" stroke-linecap="round" /></svg>
  </div>
</template>

<style>
html, body { margin: 0; background: #303c42; }
</style>

<style scoped>
* { box-sizing: border-box; }
button, input, select { font: inherit; color: inherit; margin: 0; padding: 0; border: 0; background: none; border-radius: 0; }
button { white-space: nowrap; overflow: hidden; }
i, em, u { font-style: normal; text-decoration: none; }
.app { position: relative; height: 100vh; min-height: 1000px; display: flex; flex-direction: column; overflow: hidden; font: 11px "Liberation Sans", Arial, sans-serif; color: #111; }
.title { height: 24px; flex: none; background: #fff; display: flex; align-items: center; padding-left: 2px; gap: 4px; font: 12px Roboto, sans-serif; color: #8a8a8a; }
.winbtns { margin-left: auto; display: flex; }
.winbtns button { width: 46px; height: 20px; display: flex; align-items: center; justify-content: center; }
.winbtns button:last-child { width: 48px; }
.winbtns svg { fill: none; stroke: #777; }
.menu { height: 19px; flex: none; background: #fff; display: flex; align-items: center; gap: 13px; padding: 0 7px 2px 7px; font: 12px Roboto, sans-serif; color: #555; }
.menu a { color: inherit; text-decoration: none; }
.menu .copy { margin-left: 10px; }
.audio { margin-left: auto; }
.tabs { height: 16px; flex: none; background: #1a2a33; display: flex; align-items: center; color: #dfe5e8; }
.plus { width: 13px; font-weight: bold; }
.ptab { height: 13px; width: 74px; background: #5f6a6e; font-weight: bold; margin-top: 2px; font-size: 11px; line-height: 12px; }
.monfx { margin-left: auto; width: 64px; height: 14px; background: #000; padding: 1px; display: flex; gap: 1px; margin-right: 2px; }
.monfx button { background: linear-gradient(#7fce86, #4fa35a); font: bold 7px "DejaVu Sans Condensed", "DejaVu Sans", sans-serif; color: #0a4a1c; flex: 1; height: 12px; text-align: center; }
.monfx button:last-child { flex: 0 0 12px; display: flex; align-items: center; justify-content: center; }

.main { flex: 1; min-height: 0; display: flex; background: #303c42; }
.mix { flex: none; display: flex; flex-direction: column; font-size: 9px; color: #d8dcde; }
.left { width: 82px; padding-left: 1px; }
.right { width: 111px; }
.edge { width: 4px; background: #a6acb2; flex: none; }
.fxlist { background: #000; border-radius: 3px; flex: none; width: 79px; padding-bottom: 2px; }
.right .fxlist { width: 109px; padding-bottom: 3px; }
.fxrow { height: 14px; border-bottom: 1px solid #2c2f31; display: flex; align-items: center; padding: 0 3px 0 4px; white-space: nowrap; }
.right .fxrow { padding: 0 2px; }
.fxrow span { overflow: hidden; }
.right .send { height: 21px; border-bottom: 2px solid #2f7d42; padding-top: 8px; }
.dot { width: 9px; height: 9px; border: 1px solid #113a1a; border-radius: 50%; margin-left: auto; flex: none; }
.send .dot { border: 2px solid #2fae4a; }
.rs { margin-top: 7px; height: 14px; background: #0a0a0a; color: #87898b; font: bold 9px/14px "DejaVu Sans", sans-serif; text-align: center; width: 81px; }
.right .rs { margin-top: 6px; }
.rs b { color: #fff; }
.io { height: 14px; width: 61px; background: #66727a; clip-path: polygon(0 0, 100% 0, 78% 100%, 4% 100%, 0 85%); font: bold 10px/13px "Liberation Sans", sans-serif; padding-left: 7px; color: #b9c0c4; }
.left .io { color: #aeb4b8; }
.strip { margin-top: 8px; flex: 1; min-height: 0; background: #96999c; border: 1px solid #b5b8ba; border-radius: 3px; padding: 2px; display: flex; flex-direction: column; }
.rstrip { margin-top: 11px; flex: 1; min-height: 0; padding: 0 3px; display: flex; flex-direction: column; }
.pan { appearance: none; width: 75px; height: 14px; background: #10181c; border: 2px solid #000; border-radius: 2px; display: block; flex: none; }
.pan::-webkit-slider-thumb { appearance: none; width: 3px; height: 10px; background: #5a9fc8; }
.panlab { width: 34px; height: 18px; background: #000; line-height: 18px; text-align: center; border-radius: 0 0 2px 2px; flex: none; }
.sbody { flex: 1; min-height: 0; margin-top: 16px; display: flex; gap: 5px; }
.rstrip .sbody { gap: 3px; }
.bcol { width: 28px; border: 2px solid #b2b5b8; border-radius: 4px; display: flex; flex-direction: column; align-items: center; gap: 3px; padding-top: 3px; padding-bottom: 2px; }
.rstrip .bcol { width: 30px; border-color: #5a686f; }
.rstrip .bcol .b { width: 23px; }
.g6 { margin-top: 6px; }
.push { margin-top: auto; }
.b { flex: none; width: 24px; height: 16px; border: 1px solid #1d1f20; border-radius: 2px; background: linear-gradient(#cfd2d4, #9fa4a7); color: #1c1c1c; font: bold 11px/13px "Liberation Sans", sans-serif; box-shadow: 0 0 1px #000; }
.big-o { font-size: 12px; }
.b svg { display: block; fill: none; stroke: #222; stroke-width: 1.4; }
.b small { font-size: 7px; }
.green { background: linear-gradient(#6ee06e, #3fae42); }
.red { background: linear-gradient(#ef7a74, #c64a46); color: #140000; }
.blue { background: linear-gradient(#9ccbff, #5b9be6); }
.sq { width: 16px; }
.pw { width: 16px; height: 16px; border-radius: 50%; background: #a7acae; flex: none; }
.pw.on { background: #49b84c; }
.pw svg { display: block; fill: none; stroke: #111; }
.fcol { flex: 1; display: flex; flex-direction: column; gap: 5px; min-width: 0; }
.fader { flex: 1; min-height: 0; background: #4c5c63; border: 1px solid #7c888d; border-radius: 2px; display: flex; padding: 3px 2px 3px 0; }
.rstrip .fader { border: 2px solid #5a6d74; }
.fd { appearance: none; writing-mode: vertical-lr; direction: rtl; width: 12px; height: 100%; flex: none; background: linear-gradient(#111, #111) center/2px calc(100% - 32px) no-repeat; }
.rstrip .fd { width: 10px; margin-right: 2px; }
.fd::-webkit-slider-thumb { appearance: none; width: 10px; height: 32px; border: 1px solid #444; border-radius: 2px; background: linear-gradient(#eee 0 10%, #a8abad 40%, #fff 48%, #222 49% 52%, #fff 53%, #ddd 85%, #888); }
.vu { flex: 1; background: #000; display: flex; flex-direction: column; align-items: center; }
.left .vu { padding-top: 4px; }
.vu span { height: 34px; line-height: 34px; flex: none; }
.vu .vinf { height: 12px; line-height: 12px; margin-bottom: 4px; }
.right .vu span { height: 50px; line-height: 50px; }
.right .vu .two { height: 24px; line-height: 24px; display: flex; gap: 10px; }
.right .vu .two:first-child { margin-top: 14px; margin-bottom: -12px; }
.right .vu .two:last-child { margin-top: -14px; }
output { display: flex; align-items: center; justify-content: flex-end; height: 18px; background: #000; color: #d8dcde; padding: 0 7px; border-radius: 2px; flex: none; }
.right output { justify-content: space-between; padding: 0 6px 0 3px; }
.lime { height: 12px; background: #a7bf3a; margin-top: 4px; flex: none; }
.sbar { height: 16px; display: flex; background: #d8dadb; margin-top: 1px; flex: none; margin-left: -1px; }
.sbar button { width: 17px; color: #000; font: bold 12px/14px "Liberation Sans", sans-serif; }
.sbar i { flex: 1; background: linear-gradient(#4a4d4f, #86898b); border: 1px solid #111; }
.foot { height: 6px; background: #6b757a; border-top: 2px solid #454f54; flex: none; }
.mname { margin-top: 8px; height: 14px; background: #959da1; color: #14181a; font: bold 10px/14px "DejaVu Sans", sans-serif; text-align: center; flex: none; }
.mwhite { height: 14px; background: #c9cdd0; margin-top: 1px; flex: none; }

.center { flex: 1; min-width: 0; display: flex; flex-direction: column; }
.work { flex: 1; min-height: 0; display: flex; gap: 8px; padding: 0 7px 0 8px; }
.tcp { width: 345px; flex: none; display: flex; flex-direction: column; padding-top: 3px; }
.mini { height: 60px; margin-bottom: 5px; overflow: hidden; flex: none; }
.mrow { height: 15px; display: flex; background: #0c1113; }
.mc { width: 14px; height: 14px; margin-right: 1px; flex: none; background: linear-gradient(#9fa5a9, #7f868a); display: flex; flex-direction: column; justify-content: center; align-items: center; font-size: 5px; line-height: 6px; color: #111; }
.mc.wide { width: 28px; margin: 0 1px; }
.mc svg { width: 14px; height: 14px; display: block; }
.track { height: 79px; flex: none; display: flex; background: #55656b; position: relative; }
.one { background: #bfc6ca; border-top: 1px solid #dfe4e6; }
.master { margin-bottom: 6px; }
.tnum { width: 28px; background: #6d8cd8; padding: 5px 3px; text-align: right; font-size: 10px; }
.tgrid { flex: 1; display: grid; grid-template-columns: 52px 112px 20px 50px 19px 41px; grid-auto-rows: 19px; align-items: center; padding: 1px 0 0 34px; align-content: start; }
.one .tgrid { padding-left: 6px; padding-top: 0; }
.pair { display: flex; gap: 1px; }
.trio { display: flex; }
.r2 { grid-column: 2; }
.tname { width: 106px; height: 18px; background: #738389; color: #800f46; font: bold 10px/18px "DejaVu Sans", sans-serif; }
.tname.yel { background: #e0fb52; }
.knob { width: 13px; height: 13px; border: 1px solid #333; border-radius: 50%; background: linear-gradient(#333, #333) center top/1px 6px no-repeat #c4cacc; margin-left: 3px; }
.tgrid output { height: 16px; font-size: 9px; padding: 0; justify-content: center; }
.midi { width: 128px; height: 16px; background: linear-gradient(#cfd2d4, #a7acaf); border: 1px solid #222; border-radius: 2px; font-size: 9px; text-align: left; padding-left: 3px; color: #111; }
.tvu { width: 12px; background: #000; flex: none; }
.tfill { flex: 1; background: #4b5b62; border-bottom: 1px solid #8a969b; }
.status { height: 18px; line-height: 15px; color: #e4e8ea; font-size: 9px; margin-left: -1px; flex: none; white-space: nowrap; }
.arr { flex: 1; min-width: 0; display: flex; flex-direction: column; background: #28353e; padding-top: 41px; }
.ruler { width: 100%; background: #80003f; flex: none; display: block; }
.rb { font: bold 12px "DejaVu Sans Condensed", "DejaVu Sans", sans-serif; fill: #fff; }
.rs2 { font: 10px "DejaVu Sans", sans-serif; fill: #d9a8bf; }
.arow { flex: 1; min-height: 0; display: flex; }
.grid { flex: 1; min-width: 0; height: 100%; background: #dae3e6; }
.vsb { width: 16px; display: flex; flex-direction: column; background: #1d2528; gap: 1px; }
.vsb button { height: 17px; background: linear-gradient(#e4e6e7, #c4c8ca); font: bold 13px/15px "Liberation Sans", sans-serif; flex: none; color: #111; }
.vsb svg { fill: none; stroke: #111; stroke-width: 2; }
.vsb i { flex: 1; background: linear-gradient(90deg, #8c9294, #3a3e40); border: 1px solid #999; }
.vsb b { height: 3px; background: #cdd5d7; }
.hsb { height: 19px; padding-bottom: 3px; display: flex; background: #303c42; }
.hsb button { width: 17px; background: #cfd3d5; font: bold 12px/15px "Liberation Sans", sans-serif; }
.hsb i { flex: 1; background: linear-gradient(#4e5355, #85898b); border: 1px solid #111; }

.transport { height: 40px; flex: none; margin-left: 5px; background: linear-gradient(#626e74, #48545b); border: 1px solid #0f1518; border-width: 1px 0; display: flex; align-items: center; padding-left: 10px; color: #e0e3e5; font-size: 9px; }
.tbtns { display: flex; background: #1b2a33; padding: 3px 2px; border-radius: 3px; gap: 1px; height: 30px; margin-right: 10px; }
.tbtns button { width: 37px; background: linear-gradient(#e8eaeb, #b9bdbf 50%, #dfe1e2); display: flex; align-items: center; justify-content: center; }
.disp, .ga, .box { height: 29px; background: #000; border-radius: 2px; margin-right: 9px; display: flex; align-items: center; flex: none; }
.disp { width: 271px; padding: 0 5px 0 8px; justify-content: space-between; font-size: 12px; }
.disp b { font-size: 19px; }
.ga { width: 69px; flex-direction: column; align-items: stretch; padding: 1px 3px 0; }
.ga > span { border-bottom: 1px solid #444; height: 14px; line-height: 13px; text-align: center; white-space: nowrap; }
.ga div { display: flex; justify-content: space-between; align-items: center; height: 14px; }
.ga svg { background: #2a353b; }
.sm { width: 29px; justify-content: center; }
.bpm { width: 69px; justify-content: space-around; }
.dim { color: #777; }
.sel { width: 231px; padding: 0 8px; gap: 36px; }
.sel span:first-child { margin-right: -21px; }
.last { width: 70px; }

.tools { height: 229px; flex: none; display: flex; justify-content: center; padding-top: 27px; }
.tset { display: flex; flex-direction: column; align-items: flex-start; gap: 2px; width: 1621px; }
.trow { display: flex; background: #0a0d0f; padding: 1px 0 1px 1px; }
.tc { width: 43px; height: 41px; margin-right: 2px; flex: none; background: linear-gradient(#a5abaf, #92989d 50%, #7f868a 51%, #8d9498); border: 1px solid #b0b5b8; border-color: #b0b5b8 #7d8488 #7d8488 #b0b5b8; display: flex; flex-direction: column; align-items: center; justify-content: center; font-size: 13px; line-height: 15px; color: #0c0c0c; }
.tc.wide { width: 84px; margin: 0 4px 0 2px; }
.tc svg { width: 43px; height: 41px; flex: none; }
.on { background: linear-gradient(#fdfdfe, #e6eaed); border-color: #fff; }
.rainbow { background: radial-gradient(rgba(60, 60, 60, .6), transparent 60%), conic-gradient(from 45deg, #8a1a7a, #3b1eb0, #1c50b0, #2f904a, #7a9820, #c8a820, #c8482a, #8a1a7a); }
.slate { background: #3c4f58; }
.dock { height: 15px; flex: none; background: #1a2830; margin-left: 5px; display: flex; align-items: center; color: #dfe5e8; gap: 3px; padding-left: 4px; }
.dock button { background: #667278; width: 91px; height: 13px; font: bold 10px/12px "Liberation Sans", sans-serif; display: flex; align-items: center; gap: 4px; padding-left: 5px; }
.dock i { border: 1px solid #ccc; width: 9px; height: 9px; line-height: 7px; font-weight: normal; }

.task { height: 40px; flex: none; background: #58557f; display: flex; align-items: center; color: #fff; padding-left: 3px; }
.task button { width: 49px; height: 40px; display: flex; align-items: center; justify-content: center; flex: none; }
.task .orb { margin-right: 4px; }
.task .act { background: #7571a8; border-bottom: 2px solid #c5c0f0; }
.tray { margin-left: auto; display: flex; align-items: center; gap: 7px; padding-right: 23px; font: 12px Roboto, sans-serif; }
.gsq { width: 14px; height: 14px; background: #0c8a1c; border: 1px solid #02400a; margin-right: 2px; }
.tray em, .tray u { width: 17px; font: 11px/15px "Liberation Sans", sans-serif; text-align: center; }
.tray em { background: #8df08a; color: #111; font-weight: bold; }
.clock { text-align: center; line-height: 18px; width: 56px; margin: 0 8px 0 4px; font-size: 11px; }

.win { position: absolute; background: #f0f0f0; }
.wt { height: 31px; background: #fff; display: flex; align-items: center; padding: 0 0 2px 8px; font: 12px Roboto, sans-serif; color: #999; }
.wt.dark { color: #222; }
.wt svg { margin: 0 32px 0 auto; }
.x { width: 19px; height: 19px; background: #c75050; color: #fff; font: bold 10px/16px "Open Sans", sans-serif; margin-right: 1px; }
.x.off { background: #e9e9e9; color: #fafafa; }
.vst { left: 463px; top: 163px; width: 563px; border-top: 1px solid #8b90c8; }
select { appearance: none; border: 1px solid #adadad; background: url("data:image/svg+xml,%3Csvg xmlns='http://www.w3.org/2000/svg' width='10' height='6'%3E%3Cpath d='M1 1l4 4 4-4' fill='none' stroke='%23444'/%3E%3C/svg%3E") right 4px center no-repeat #e3e3e3; height: 21px; padding-left: 3px; }
.vbar { display: flex; align-items: center; height: 24px; padding: 0 6px 0 2px; }
.vbar select { width: 340px; margin-right: 5px; }
.wb { height: 18px; border: 1px solid #adadad; background: #e1e1e1; text-align: center; }
.w1 { width: 16px; margin-right: 5px; } .w2 { width: 43px; margin-right: 5px; } .w3 { width: 73px; margin-right: 5px; } .w4 { width: 24px; margin-right: 7px; }
.kn { width: 15px; height: 15px; border-radius: 50%; border: 1px solid #777; background: radial-gradient(#fff, #bbb); margin-right: 4px; flex: none; }
.kn svg { display: block; }
input[type=checkbox] { appearance: none; width: 13px; height: 13px; border: 1px solid #222; background: #fff; flex: none; }
input[type=checkbox]:checked { background: url("data:image/svg+xml,%3Csvg xmlns='http://www.w3.org/2000/svg' width='11' height='11'%3E%3Cpath d='M2 5l3 3 5-6' fill='none' stroke='%23111' stroke-width='1.3'/%3E%3C/svg%3E") center no-repeat #fff; }
.vmet { display: flex; align-items: center; height: 25px; padding: 0 5px 1px 3px; }
.vmet label { margin-left: auto; margin-right: 7px; }
.vmet select { width: 69px; background-color: #ececec; }
.vbody { display: flex; padding: 0 6px 0 3px; gap: 5px; }
.lev { width: 24px; height: 398px; background: linear-gradient(#111, #111) center 36px/2px 100% no-repeat, linear-gradient(#5a0000 36px, #063434 36px, #043030 60%, #021412); color: #eee; font-size: 10px; text-align: center; overflow: hidden; display: flex; flex-direction: column; flex: none; padding-top: 12px; }
.lev span { height: 35px; line-height: 35px; flex: none; }
.lev .li { height: 12px; line-height: 12px; margin-bottom: -6px; }
.lev span:nth-last-child(-n+6) { color: #a5b0ae; }
.vmid { width: 496px; flex: none; display: flex; flex-direction: column; }
.vtop { display: flex; }
.vcol { width: 465px; }
.graph { display: block; font-size: 9px; }
.vtabs { display: flex; align-items: flex-end; height: 24px; padding-left: 1px; }
.vtabs button { width: 42px; height: 19px; border: 1px solid #d9d9d9; border-bottom: 0; text-align: left; padding-left: 4px; font-size: 12px; margin-right: -1px; }
.vtabs .cur { width: 46px; height: 22px; background: #fff; padding-left: 7px; }
.panel { margin-left: 1px; width: 460px; height: 228px; border: 1px solid #dcdcdc; background: #fff; padding: 5px 3px 3px 11px; }
.inner { background: #f0f0f0; height: 218px; display: flex; padding-top: 1px; gap: 1px; }
.prs { width: 390px; }
.pr { height: 24px; display: flex; align-items: center; }
.pl { width: 90px; text-align: right; margin-right: 16px; }
.tf { margin-left: auto; margin-right: 10px; }
.ck { display: flex; align-items: center; gap: 3px; white-space: nowrap; }
.cks { height: 27px; gap: 10px; padding-top: 2px; }
.log { height: 18px; }
.num { width: 53px; height: 20px; border: 1px solid #7a7a7a; background: #fff; padding: 0 2px; flex: none; }
.sl { appearance: none; width: 225px; height: 18px; margin-right: 6px; border: 1px solid #8a8f91; border-radius: 1px; background: linear-gradient(#555, #555) center/208px 1px no-repeat, linear-gradient(#c5cacc, #b0b6b8); flex: none; }
.n1 { background: linear-gradient(#444, #444) 60px 0/1px 100% no-repeat, linear-gradient(#555, #555) center/208px 1px no-repeat, linear-gradient(#c5cacc, #b0b6b8); }
.n2 { width: 183px; background: linear-gradient(#444, #444) 125px 0/1px 100% no-repeat, linear-gradient(#555, #555) center/166px 1px no-repeat, linear-gradient(#c5cacc, #b0b6b8); }
.sl::-webkit-slider-thumb { appearance: none; width: 15px; height: 16px; background: url("data:image/svg+xml,%3Csvg xmlns='http://www.w3.org/2000/svg' width='15' height='16'%3E%3Cpath d='M1 2.500h13L7.500 14z' fill='%23808a8e' stroke='%23222'/%3E%3C/svg%3E"); }
.vs { appearance: none; writing-mode: vertical-lr; direction: rtl; width: 17px; border: 1px solid #8a8f91; background: linear-gradient(#555, #555) center/1px calc(100% - 16px) no-repeat, linear-gradient(90deg, #c5cacc, #b0b6b8); display: block; }
.vs::-webkit-slider-thumb { appearance: none; width: 15px; height: 15px; background: url("data:image/svg+xml,%3Csvg xmlns='http://www.w3.org/2000/svg' width='15' height='15'%3E%3Cpath d='M1.500 1v13L14 7.500z' fill='%23808a8e' stroke='%23222'/%3E%3C/svg%3E"); }
.gcol { width: 37px; display: flex; flex-direction: column; align-items: center; }
.gcol label { height: 19px; line-height: 24px; }
.gcol .vs { height: 150px; margin-bottom: 5px; }
.gcol .num { width: 37px; text-align: center; }
.ggain { width: 31px; display: flex; flex-direction: column; align-items: center; padding-left: 2px; }
.ggain label { height: 18px; line-height: 14px; }
.ggain .vs { height: 354px; }
.vbot { display: flex; align-items: center; height: 30px; padding-left: 2px; }
.vbot .wb { height: 22px; margin-right: 5px; width: 57px; }
.vbot .wb:nth-child(2) { width: 68px; }
.vbot .wb:nth-child(3) { width: 90px; margin-right: 8px; }
.ml { margin-left: auto; margin-right: 16px; }
.c { width: 33px; text-align: center; margin-left: 12px; }
.big { position: absolute; left: 150px; top: 319px; font: 107px/140px Lato, sans-serif; color: #ed1c24; -webkit-text-stroke: 2px #ed1c24; }

.pm { left: 1063px; top: 89px; width: 714px; background: #b0b8be; }
.pbody { padding: 5px 4px 4px 5px; color: #22292c; }
.cpu { display: block; }
.cpu text { font: 9px "DejaVu Sans Condensed", "DejaVu Sans", sans-serif; fill: #26363d; }
.pcols { display: flex; margin-top: 8px; }
.ptext { width: 220px; line-height: 13px; flex: none; white-space: nowrap; padding-top: 1px; }
.ptext div { height: 13px; }
.ptab2 { flex: 1; min-width: 0; height: 607px; background: #fff; border: 1px solid #6d7478; position: relative; display: flex; flex-direction: column; overflow: hidden; color: #111; }
table { border-collapse: collapse; table-layout: fixed; width: 484px; }
th { font-weight: normal; text-align: left; height: 25px; padding: 1px 0 0 6px; border-left: 1px solid #dcdcdc; }
th:first-child { border-left: 0; }
td { height: 17px; padding: 0 0 0 7px; white-space: nowrap; }
th:first-child, td:first-child { padding-left: 7px; }
.c1 { width: 269px; } .c2 { width: 80px; } .c3 { width: 40px; } .c4 { width: 85px; }
.sort { position: absolute; left: 131px; top: 1px; }
.psb { margin-top: auto; height: 17px; background: #f0f0f0; display: flex; align-items: center; }
.psb i { width: 390px; height: 15px; background: #cdcdcd; margin-right: auto; }
.psb svg { fill: none; stroke: #333; stroke-width: 1.5; }
.ring { position: absolute; left: 1019px; top: 131px; pointer-events: none; }
</style>
